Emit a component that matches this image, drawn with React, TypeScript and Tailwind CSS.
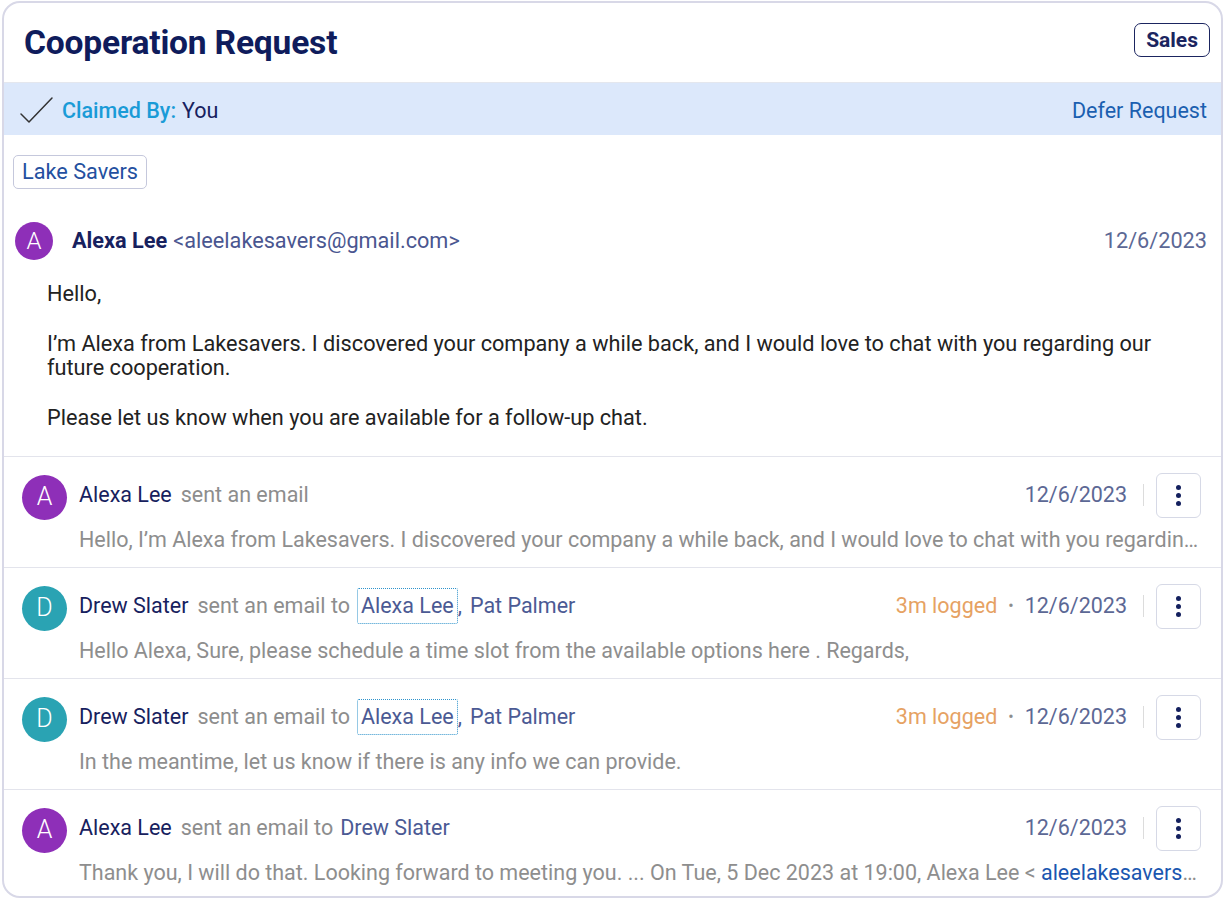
import React from "react";

type Row = {
  initial: string;
  avatar: string;
  name: string;
  action: string;
  recipients?: { name: string; focused?: boolean }[];
  logged?: string;
  date: string;
  preview: React.ReactNode;
};

const rows: Row[] = [
  {
    initial: "A",
    avatar: "bg-[#8e2fb8]",
    name: "Alexa Lee",
    action: "sent an email",
    date: "12/6/2023",
    preview:
      "Hello, I’m Alexa from Lakesavers. I discovered your company a while back, and I would love to chat with you regarding our future cooperation.",
  },
  {
    initial: "D",
    avatar: "bg-[#2aa3b3]",
    name: "Drew Slater",
    action: "sent an email to",
    recipients: [{ name: "Alexa Lee", focused: true }, { name: "Pat Palmer" }],
    logged: "3m logged",
    date: "12/6/2023",
    preview:
      "Hello Alexa, Sure, please schedule a time slot from the available options here . Regards,",
  },
  {
    initial: "D",
    avatar: "bg-[#2aa3b3]",
    name: "Drew Slater",
    action: "sent an email to",
    recipients: [{ name: "Alexa Lee", focused: true }, { name: "Pat Palmer" }],
    logged: "3m logged",
    date: "12/6/2023",
    preview: "In the meantime, let us know if there is any info we can provide.",
  },
  {
    initial: "A",
    avatar: "bg-[#8e2fb8]",
    name: "Alexa Lee",
    action: "sent an email to",
    recipients: [{ name: "Drew Slater" }],
    date: "12/6/2023",
    preview: (
      <>
        Thank you, I will do that. Looking forward to meeting you. ... On Tue, 5 Dec 2023 at 19:00, Alexa Lee &lt;{" "}
        <span className="text-[#1a56b0]">aleelakesavers@gmail.com</span>&gt; wrote:
      </>
    ),
  },
];

function Kebab() {
  return (
    <button className="w-[45px] h-[45px] rounded-[6px] border border-[#d6d9e6] bg-white flex flex-col items-center justify-center gap-[3px]">
      <span className="w-[5px] h-[5px] rounded-full bg-[#14205e]" />
      <span className="w-[5px] h-[5px] rounded-full bg-[#14205e]" />
      <span className="w-[5px] h-[5px] rounded-full bg-[#14205e]" />
    </button>
  );
}

function ActivityRow({ row }: { row: Row }) {
  return (
    <div className="h-[111px] shrink-0 flex pl-[18px] pr-[20px] pt-[16px] border-b border-[#e3e4ec]">
      <div
        className={`w-[45px] h-[45px] mt-[2px] rounded-full ${row.avatar} text-white text-[25px] font-light flex items-center justify-center shrink-0`}
      >
        {row.initial}
      </div>
      <div className="flex-1 min-w-0 ml-[12px] flex flex-col">
        <div className="h-[45px] flex items-center">
          <div className="flex-1 min-w-0 flex items-center whitespace-nowrap">
            <span className="text-[#17215e]">{row.name}</span>
            <span className="ml-[9px] text-[#8d8d8d]">{row.action}</span>
            {row.recipients?.map((r, i) => (
              <React.Fragment key={i}>
                {i > 0 && <span className="text-[#4b5a94] mr-[8px]">,</span>}
                {r.focused ? (
                  <span className="ml-[7px] px-[3px] py-[4px] border border-dotted border-[#2f93cc] rounded-[2px] text-[#4b5a94] leading-[26px]">
                    {r.name}
                  </span>
                ) : (
                  <span className={`${i === 0 ? "ml-[7px]" : ""} text-[#4b5a94]`}>{r.name}</span>
                )}
              </React.Fragment>
            ))}
          </div>
          {row.logged && (
            <>
              <span className="text-[#e6a263]">{row.logged}</span>
              <span className="mx-[11px] text-[#8d8d8d] text-[16px]">•</span>
            </>
          )}
          <span className="text-[#5c6895]">{row.date}</span>
          <span className="ml-[16px] mr-[12px] w-px h-[22px] bg-[#dcdcdc]" />
          <Kebab />
        </div>
        <div className="mt-[9px] text-[#8e8e8e] truncate leading-[26px]">{row.preview}</div>
      </div>
    </div>
  );
}

export default function App() {
  return (
    <div
      className="bg-white min-h-screen pl-[2px] pt-[1px] text-[21.5px] leading-[26px]"
      style={{ fontFamily: "Roboto, 'Noto Sans', sans-serif" }}
    >
      <div className="w-[1221px] h-[897px] border-2 border-[#d8d8e7] rounded-[18px] overflow-hidden flex flex-col bg-white">
        {/* Header */}
        <div className="h-[80px] shrink-0 flex items-center justify-between pl-[20px] pr-[11px] border-b border-[#e4e7ee]">
          <h1 className="text-[33.6px] font-bold text-[#0f1c5c] tracking-[-0.2px]">Cooperation Request</h1>
          <span className="mb-[5px] px-[11px] h-[34px] flex items-center rounded-[7px] border-[1.5px] border-[#1b2560] text-[#1b2560] text-[21px] font-bold">
            Sales
          </span>
        </div>

        {/* Claimed band */}
        <div className="h-[52px] shrink-0 bg-[#dce8fb] flex items-center justify-between pl-[14px] pr-[14px] pt-[3px]">
          <div className="flex items-center">
            <svg width="36" height="30" viewBox="0 0 36 30" fill="none" className="-mt-[2px]">
              <path d="M3 19 L11 27 L34 3" stroke="#333" strokeWidth="1.5" strokeLinecap="round" strokeLinejoin="round" />
            </svg>
            <span className="ml-[8px] font-medium text-[#1a9bd7]">Claimed By:</span>
            <span className="ml-[6px] text-[#17215e]">You</span>
          </div>
          <span className="text-[#1b5fb0]">Defer Request</span>
        </div>

        {/* Company tag */}
        <div className="pl-[9px] pt-[20px] shrink-0">
          <span className="inline-flex items-center h-[34px] px-[8px] rounded-[5px] border border-[#c5c8dc] text-[#2450a0] text-[21.7px]">
            Lake Savers
          </span>
        </div>

        {/* Main email */}
        <div className="shrink-0 pl-[11px] pr-[14px] pt-[33px] pb-[25px] border-b border-[#e3e4ec] text-[21.7px]">
          <div className="flex items-center">
            <div className="w-[38px] h-[38px] rounded-full bg-[#8e2fb8] text-white text-[24px] font-light flex items-center justify-center">
              A
            </div>
            <span className="ml-[19px] font-bold text-[#17215e]">Alexa Lee</span>
            <span className="ml-[6px] text-[#4a5690]">&lt;aleelakesavers@gmail.com&gt;</span>
            <span className="ml-auto text-[#5c6895]">12/6/2023</span>
          </div>
          <div className="pl-[32px] pr-[40px] pt-[22px] text-[#222] leading-[24.8px]">
            <p>Hello,</p>
            <p className="mt-[24.8px]">
              I’m Alexa from Lakesavers. I discovered your company a while back, and I would love to chat with you regarding our
              future cooperation.
            </p>
            <p className="mt-[24.8px]">Please let us know when you are available for a follow-up chat.</p>
          </div>
        </div>

        {rows.map((row, i) => (
          <ActivityRow key={i} row={row} />
        ))}
      </div>
    </div>
  );
}
